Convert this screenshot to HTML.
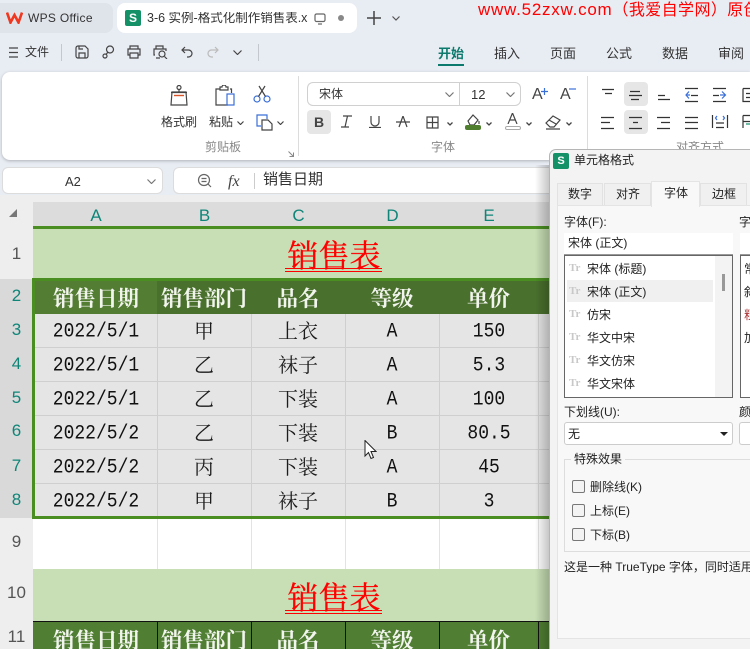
<!DOCTYPE html>
<html lang="zh"><head><meta charset="utf-8"><style>
*{box-sizing:border-box}
html,body{margin:0;padding:0;width:750px;height:649px;overflow:hidden}
body{font-family:"Liberation Sans","Noto Sans CJK SC",sans-serif;color:#333}
#w{position:absolute;left:0;top:0;width:750px;height:649px;overflow:hidden;background:#e8ecf3;contain:paint}
.a{position:absolute}
.t{position:absolute;white-space:nowrap;line-height:1}
.c{position:absolute;text-align:center;white-space:nowrap;font-family:"Liberation Serif","Noto Serif CJK SC",serif;color:#1c1c1c}
svg{position:absolute;overflow:hidden;fill:none;stroke:#444;stroke-width:1.2}
.rh{position:absolute;left:0;width:33px;text-align:center;font-size:17px;color:#555;background:#eee}
.rh.s{background:#d9d9d9;color:#0f8578}
.ch{position:absolute;top:202px;height:24px;line-height:27px;text-align:center;font-size:17px;color:#0f8578}
.d{font-family:"Liberation Mono",monospace;font-size:18px;transform:scaleY(1.15);color:#111}
.z{font-size:20px}
.h{font-size:21.5px;font-weight:700;color:#f2f5ee}
.v{position:absolute;width:1px;background:#cfcfcf}
.hl{position:absolute;height:1px;background:#cfcfcf}
.li{position:absolute;left:587px;font-size:12px;color:#222;white-space:nowrap;line-height:14px}
.tt{position:absolute;left:569px;font:700 11px "Liberation Serif",serif;color:#c8c8c8}
.cb{position:absolute;left:572px;width:13px;height:13px;border:1px solid #777;border-radius:2px;background:#f3f3f3}
.ti{position:absolute;left:33px;width:602px;font-size:31px;line-height:40px;color:#f00;-webkit-text-stroke:.3px #f00}
.ul{position:absolute;left:285px;width:97px;height:1px;background:#f00}
</style></head><body><div id="w">

<!-- Title bar -->
<div class="a" style="left:0;top:3px;width:113px;height:30px;background:#dfe3ea;border-radius:0 8px 8px 0"></div>
<svg style="left:6px;top:11px" width="17" height="13" viewBox="0 0 17 13"><path d="M1 1.500 4.500 11.500 8.500 4 12.500 11.500 16 1.500" stroke="#f0371f" stroke-width="2.600"/></svg>
<div class="t" style="left:28px;top:12px;font-size:12px;color:#333;letter-spacing:.3px">WPS Office</div>
<div class="a" style="left:117px;top:3px;width:240px;height:30px;background:#fff;border-radius:8px"></div>
<div class="a" style="left:125px;top:10px;width:16px;height:16px;background:#149167;border-radius:2px;color:#fff;font:700 12px/16px 'Liberation Sans',sans-serif;text-align:center">S</div>
<div class="t" style="left:147px;top:12px;font-size:12.5px;width:161px;overflow:hidden;color:#333">3-6 实例-格式化制作销售表.xlsx</div>
<svg style="left:314px;top:13px" width="12" height="12" viewBox="0 0 12 12"><rect x="1" y="1" width="10" height="7.500" rx="1.500" stroke="#666"/><path d="M4 11H8" stroke="#666"/></svg>
<div class="a" style="left:338px;top:15px;width:6px;height:6px;border-radius:50%;background:#888"></div>
<svg style="left:367px;top:11px" width="14" height="14" viewBox="0 0 14 14"><path d="M7 0V14M0 7H14" stroke="#444" stroke-width="1.500"/></svg>
<svg style="left:392px;top:16px" width="8" height="5" viewBox="0 0 8 5"><path d="M.5 .5 4 4 7.500 .5" stroke="#555"/></svg>
<div class="t" style="left:478px;top:1px;font-size:17px;color:#f00;letter-spacing:.75px;line-height:17px;width:272px;overflow:hidden">www.52zxw.com<span style="font-size:16px;letter-spacing:.4px">（我爱自学网）原创</span></div>

<!-- Quick access row -->
<svg style="left:8px;top:47px" width="11" height="11" viewBox="0 0 11 11"><path d="M1 1H10M1 5.500H10M1 10H10"/></svg>
<div class="t" style="left:25px;top:46px;font-size:12px;color:#333">文件</div>
<div class="a" style="left:61px;top:44px;width:1px;height:17px;background:#c4c8ce"></div>
<svg style="left:75px;top:45px" width="14" height="14" viewBox="0 0 14 14"><path d="M1 3a2 2 0 0 1 2-2H10L13 4V11a2 2 0 0 1-2 2H3a2 2 0 0 1-2-2ZM4 13V8H10V13M4 1V4H8"/></svg>
<svg style="left:102px;top:45px" width="13" height="14" viewBox="0 0 13 14"><circle cx="8" cy="4.500" r="3.500"/><circle cx="3" cy="11" r="2"/><path d="M6 7 4 9.500"/></svg>
<svg style="left:127px;top:45px" width="14" height="14" viewBox="0 0 14 14"><path d="M3 4V1H11V4M3 10H1V4H13V10H11M3 8H11V13H3Z"/></svg>
<svg style="left:153px;top:45px" width="15" height="14" viewBox="0 0 15 14"><path d="M3 4V1H10V4M2 10H1V4H13V6"/><circle cx="9" cy="9" r="3"/><path d="M11.500 11.500 14 14M3 13H7"/></svg>
<svg style="left:181px;top:46px" width="12" height="12" viewBox="0 0 12 12"><path d="M4 1 1 4 4 7M1 4H7.500A3.500 3.500 0 0 1 7.500 11H6"/></svg>
<svg style="left:207px;top:46px" width="12" height="12" viewBox="0 0 12 12"><path d="M8 1 11 4 8 7M11 4H4.500A3.500 3.500 0 0 0 4.500 11H6" stroke="#bbb"/></svg>
<svg style="left:233px;top:50px" width="9" height="5" viewBox="0 0 9 5"><path d="M.5 .5 4.500 4.500 8.500 .5"/></svg>
<div class="a" style="left:258px;top:44px;width:1px;height:17px;background:#c4c8ce"></div>

<!-- Ribbon tabs -->
<div class="t" style="left:438px;top:47px;font-size:13px;font-weight:700;color:#0c7a6c">开始</div>
<div class="a" style="left:438px;top:64px;width:26px;height:2px;background:#0c7a6c"></div>
<div class="t" style="left:494px;top:47px;font-size:13px">插入</div>
<div class="t" style="left:550px;top:47px;font-size:13px">页面</div>
<div class="t" style="left:606px;top:47px;font-size:13px">公式</div>
<div class="t" style="left:662px;top:47px;font-size:13px">数据</div>
<div class="t" style="left:718px;top:47px;font-size:13px">审阅</div>

<!-- Ribbon -->
<div class="a" style="left:2px;top:72px;width:748px;height:88px;background:#fff;border-radius:8px 0 0 8px;box-shadow:0 1px 3px rgba(0,0,0,.25)"></div>
<div class="a" style="left:298px;top:76px;width:1px;height:80px;background:#dcdcdc"></div>
<div class="a" style="left:587px;top:76px;width:1px;height:80px;background:#dcdcdc"></div>

<svg style="left:169px;top:85px" width="20" height="21" viewBox="0 0 20 21"><circle cx="10" cy="2.500" r="2"/><path d="M3 7H17L18 20H2L3 7ZM10 4.500V7M2 7.500H18" stroke="#444"/><path d="M5 10.500H15" stroke="#d8542a" stroke-width="1.400"/></svg>
<svg style="left:215px;top:85px" width="22" height="21" viewBox="0 0 22 21"><path d="M5 4H1V20H13M15 4H16.500V8M5 4V2H7A2 2 0 0 1 11 2H13V4V5H5Z"/><rect x="12" y="9" width="7" height="11" stroke="#3a6fd8"/></svg>
<svg style="left:253px;top:85px" width="18" height="18" viewBox="0 0 18 18"><circle cx="4" cy="14" r="3" stroke="#3a6fd8"/><circle cx="14" cy="14" r="3" stroke="#3a6fd8"/><path d="M5.500 11.500 12 1M12.500 11.500 6 1"/></svg>
<svg style="left:256px;top:114px" width="18" height="17" viewBox="0 0 18 17"><path d="M5 12H1V1H11V5" stroke="#3a6fd8"/><path d="M6 6H12L16 10V16H6Z"/></svg>
<svg style="left:277px;top:121px" width="7" height="4" viewBox="0 0 7 4"><path d="M.5 .5 3.500 3.500 6.500 .5"/></svg>
<svg style="left:237px;top:121px" width="7" height="4" viewBox="0 0 7 4"><path d="M.5 .5 3.500 3.500 6.500 .5"/></svg>
<div class="t" style="left:161px;top:116px;font-size:12px">格式刷</div>
<div class="t" style="left:209px;top:116px;font-size:12px">粘贴</div>
<div class="t" style="left:205px;top:141px;font-size:12px;color:#888">剪贴板</div>
<svg style="left:288px;top:151px" width="6" height="6" viewBox="0 0 6 6"><path d="M.5 .5 5.500 5.500M5.500 1.500V5.500H1.500" stroke="#888" stroke-width="1"/></svg>

<div class="a" style="left:307px;top:82px;width:154px;height:24px;border:1px solid #d0d0d0;border-right:0;border-radius:6px 0 0 6px"></div>
<div class="a" style="left:459px;top:82px;width:62px;height:24px;border:1px solid #d0d0d0;border-radius:0 6px 6px 0"></div>
<div class="t" style="left:319px;top:88px;font-size:12px;color:#333">宋体</div>
<svg style="left:445px;top:92px" width="9" height="5" viewBox="0 0 9 5"><path d="M.5 .5 4.500 4.500 8.500 .5" stroke="#777"/></svg>
<div class="t" style="left:471px;top:88px;font-size:13px">12</div>
<svg style="left:506px;top:92px" width="9" height="5" viewBox="0 0 9 5"><path d="M.5 .5 4.500 4.500 8.500 .5" stroke="#777"/></svg>
<div class="t" style="left:532px;top:87px;font-size:16px;color:#444">A</div>
<svg style="left:541px;top:88px" width="7" height="7" viewBox="0 0 7 7"><path d="M3.500 0V7M0 3.500H7" stroke="#3a6fd8"/></svg>
<div class="t" style="left:560px;top:87px;font-size:16px;color:#444">A</div>
<svg style="left:569px;top:88px" width="7" height="2" viewBox="0 0 7 2"><path d="M0 1H7" stroke="#3a6fd8"/></svg>

<div class="a" style="left:307px;top:110px;width:24px;height:24px;background:#e6e6e6;border-radius:4px"></div>
<div class="t" style="left:314px;top:115px;font-size:14px;font-weight:700;color:#444">B</div>
<svg style="left:340px;top:115px" width="13" height="13" viewBox="0 0 13 13"><path d="M3 1H12M7.500 1 5 12M1 12H9"/></svg>
<svg style="left:369px;top:116px" width="12" height="12" viewBox="0 0 12 12"><path d="M2 0V6A4 4 0 0 0 10 6V0M0 11.500H12"/></svg>
<svg style="left:396px;top:116px" width="14" height="12" viewBox="0 0 14 12"><path d="M3 11 7 0 11 11M0 6H14"/></svg>
<svg style="left:426px;top:116px" width="13" height="13" viewBox="0 0 13 13"><path d="M1 1H12V12H1ZM6.500 1V12M1 6.500H12"/></svg>
<svg style="left:447px;top:122px" width="6" height="4" viewBox="0 0 6 4"><path d="M.5 .5 3 3 5.500 .5" stroke-width="1.300"/></svg>
<svg style="left:466px;top:114px" width="15" height="12" viewBox="0 0 15 12"><path d="M2 7 7 1 12 6 8 11H4ZM13 7V10"/></svg>
<div class="a" style="left:465px;top:125px;width:16px;height:5px;background:#4f7f2e;border-radius:2px"></div>
<svg style="left:486px;top:122px" width="6" height="4" viewBox="0 0 6 4"><path d="M.5 .5 3 3 5.500 .5" stroke-width="1.300"/></svg>
<svg style="left:507px;top:113px" width="11" height="11" viewBox="0 0 11 11"><path d="M1 11 5.500 0 10 11M3 7H8"/></svg>
<div class="a" style="left:505px;top:126px;width:16px;height:4px;border:1px solid #aaa;border-radius:2px"></div>
<svg style="left:526px;top:122px" width="6" height="4" viewBox="0 0 6 4"><path d="M.5 .5 3 3 5.500 .5" stroke-width="1.300"/></svg>
<svg style="left:545px;top:115px" width="16" height="15" viewBox="0 0 16 15"><path d="M1 8 8 1 15 5 9 12H5ZM4 5 11 9M1 14H15"/></svg>
<svg style="left:566px;top:122px" width="6" height="4" viewBox="0 0 6 4"><path d="M.5 .5 3 3 5.500 .5" stroke-width="1.300"/></svg>
<div class="t" style="left:431px;top:141px;font-size:12px;color:#888">字体</div>

<div class="a" style="left:624px;top:82px;width:24px;height:24px;background:#e6e6e6;border-radius:4px"></div>
<div class="a" style="left:624px;top:110px;width:24px;height:24px;background:#e6e6e6;border-radius:4px"></div>
<!-- alignment icons: local coords = page coords minus (590,78) -->
<svg style="left:590px;top:78px" width="160" height="62" viewBox="0 0 160 62">
<path stroke="#333" d="M12 11.500H24M15 15.500H22M40 13.500H50M39 17.500H52M41 21.500H49M68 17.500H75M68 21.500H80M95 10.500H108M95 23.500H108M101 17.500H108M123 10.500H136M123 23.500H136M123 17.500H129M153 10.500V23.500H160M153 10.500H160M156 15.500H160M156 19.500H160"/>
<path stroke="#3a6fd8" d="M99 13.500 96 17 99 20.500M96 17H100M132 13.500 135.500 17 132 20.500M135 17H130"/>
<path stroke="#333" d="M11 39.500H24M11 44.500H20M11 50.500H24M39 39.500H52M43 44.500H48M39 50.500H52M67 39.500H80M71 44.500H80M67 50.500H80M95 39.500H108M95 44.500H108M95 50.500H108M122.500 37V50M137.500 37V50M126 45H134M126 49.500H134M153 37.500H160M153 37.500V50M153 43.500H160"/>
<path stroke="#3a6fd8" d="M127 38 125.500 40 127 42M133 38 134.500 40 133 42"/>
<path stroke="#15906e" d="M156 46H160"/>
</svg>
<div class="t" style="left:676px;top:141px;font-size:12px;color:#888;width:48px;height:8px;overflow:hidden">对齐方式</div>

<!-- Formula bar -->
<div class="a" style="left:2px;top:167px;width:161px;height:27px;background:#fff;border:1px solid #dcdcdc;border-radius:6px"></div>
<div class="t" style="left:65px;top:175px;font-size:13px;color:#333">A2</div>
<svg style="left:147px;top:179px" width="9" height="5" viewBox="0 0 9 5"><path d="M.5 .5 4.500 4.500 8.500 .5" stroke="#777"/></svg>
<div class="a" style="left:173px;top:167px;width:577px;height:27px;background:#fff;border:1px solid #dcdcdc;border-right:0;border-radius:6px 0 0 6px"></div>
<svg style="left:197px;top:173px" width="15" height="15" viewBox="0 0 15 15"><circle cx="7" cy="7" r="5.500" stroke="#666"/><path d="M4.500 5.500H9.500M4.500 8.500H9.500M11 11 14 14" stroke="#666"/></svg>
<div class="t" style="left:228px;top:173px;font:italic 16px 'Liberation Serif',serif;color:#444">fx</div>
<div class="a" style="left:254px;top:173px;width:1px;height:16px;background:#ccc"></div>
<div class="t" style="left:263px;top:172px;font-size:15px;color:#333">销售日期</div>

<!-- Sheet base -->
<div class="a" style="left:0;top:195px;width:750px;height:454px;background:#eee"></div>
<div class="a" style="left:33px;top:202px;width:717px;height:447px;background:#fff"></div>

<svg style="left:9px;top:209px" width="8" height="8" viewBox="0 0 8 8"><path d="M8 0V8H0Z" fill="#777" stroke="none"/></svg>
<!-- Col headers -->
<div class="a" style="left:33px;top:202px;width:717px;height:24px;background:#dcdcdc"></div>
<div class="ch" style="left:33px;width:126px">A</div>
<div class="ch" style="left:157px;width:95px">B</div>
<div class="ch" style="left:251px;width:95px">C</div>
<div class="ch" style="left:345px;width:95px">D</div>
<div class="ch" style="left:439px;width:100px">E</div>

<!-- Row headers -->
<div class="rh" style="top:228px;height:51px;line-height:51px">1</div>
<div class="rh s" style="top:279px;height:35px;line-height:33px">2</div>
<div class="rh s" style="top:314px;height:33px;line-height:31px">3</div>
<div class="rh s" style="top:347px;height:34px;line-height:34px">4</div>
<div class="rh s" style="top:381px;height:34px;line-height:34px">5</div>
<div class="rh s" style="top:415px;height:34px;line-height:32px">6</div>
<div class="rh s" style="top:449px;height:34px;line-height:34px">7</div>
<div class="rh s" style="top:483px;height:35px;line-height:34px">8</div>
<div class="rh" style="top:518px;height:51px;line-height:47px">9</div>
<div class="rh" style="top:569px;height:52px;line-height:48px">10</div>
<div class="rh" style="top:621px;height:28px;line-height:32px">11</div>

<!-- Title rows -->
<div class="a" style="left:33px;top:228px;width:717px;height:51px;background:#c8dfb5"></div>
<div class="a" style="left:33px;top:569px;width:717px;height:52px;background:#c8dfb5"></div>
<div class="c ti" style="top:237px">销售表</div>
<div class="ul" style="top:268px"></div><div class="ul" style="top:271px"></div>
<div class="c ti" style="top:579px">销售表</div>
<div class="ul" style="top:610px"></div><div class="ul" style="top:613px"></div>

<!-- Header row + body -->
<div class="a" style="left:33px;top:279px;width:717px;height:35px;background:#4a702d"></div>
<div class="a" style="left:35px;top:281px;width:122px;height:33px;background:#537d33"></div>
<div class="a" style="left:33px;top:314px;width:717px;height:204px;background:#e5e5e5"></div>
<div class="hl" style="left:35px;top:347px;width:715px"></div>
<div class="hl" style="left:35px;top:381px;width:715px"></div>
<div class="hl" style="left:35px;top:415px;width:715px"></div>
<div class="hl" style="left:35px;top:449px;width:715px"></div>
<div class="hl" style="left:35px;top:483px;width:715px"></div>
<div class="v" style="left:157px;top:314px;height:204px"></div>
<div class="v" style="left:251px;top:314px;height:204px"></div>
<div class="v" style="left:345px;top:314px;height:204px"></div>
<div class="v" style="left:439px;top:314px;height:204px"></div>
<div class="v" style="left:538px;top:314px;height:204px"></div>
<div class="v" style="left:157px;top:518px;height:51px;background:#e3e3e3"></div>
<div class="v" style="left:251px;top:518px;height:51px;background:#e3e3e3"></div>
<div class="v" style="left:345px;top:518px;height:51px;background:#e3e3e3"></div>
<div class="v" style="left:439px;top:518px;height:51px;background:#e3e3e3"></div>
<div class="v" style="left:538px;top:518px;height:51px;background:#e3e3e3"></div>

<!-- Selection border -->
<div class="a" style="left:33px;top:226px;width:717px;height:3px;background:#4a8e22"></div>
<div class="a" style="left:32px;top:278px;width:718px;height:3px;background:#4a8e22"></div>
<div class="a" style="left:32px;top:516px;width:718px;height:3px;background:#4a8e22"></div>
<div class="a" style="left:32px;top:278px;width:3px;height:241px;background:#4a8e22"></div>

<!-- Header text -->
<div class="c h" style="left:33px;top:286px;width:126px;line-height:26px">销售日期</div>
<div class="c h" style="left:157px;top:286px;width:94px;line-height:26px">销售部门</div>
<div class="c h" style="left:251px;top:286px;width:94px;line-height:26px">品名</div>
<div class="c h" style="left:345px;top:286px;width:94px;line-height:26px">等级</div>
<div class="c h" style="left:439px;top:286px;width:99px;line-height:26px">单价</div>

<!-- Body -->
<div class="c d" style="left:33px;top:320px;width:126px;line-height:24px">2022/5/1</div><div class="c z" style="left:157px;top:320px;width:94px;line-height:24px">甲</div><div class="c z" style="left:251px;top:320px;width:94px;line-height:24px">上衣</div><div class="c d" style="left:345px;top:320px;width:94px;line-height:24px">A</div><div class="c d" style="left:439px;top:320px;width:100px;line-height:24px">150</div>
<div class="c d" style="left:33px;top:354px;width:126px;line-height:24px">2022/5/1</div><div class="c z" style="left:157px;top:354px;width:94px;line-height:24px">乙</div><div class="c z" style="left:251px;top:354px;width:94px;line-height:24px">袜子</div><div class="c d" style="left:345px;top:354px;width:94px;line-height:24px">A</div><div class="c d" style="left:439px;top:354px;width:100px;line-height:24px">5.3</div>
<div class="c d" style="left:33px;top:388px;width:126px;line-height:24px">2022/5/1</div><div class="c z" style="left:157px;top:388px;width:94px;line-height:24px">乙</div><div class="c z" style="left:251px;top:388px;width:94px;line-height:24px">下装</div><div class="c d" style="left:345px;top:388px;width:94px;line-height:24px">A</div><div class="c d" style="left:439px;top:388px;width:100px;line-height:24px">100</div>
<div class="c d" style="left:33px;top:422px;width:126px;line-height:24px">2022/5/2</div><div class="c z" style="left:157px;top:422px;width:94px;line-height:24px">乙</div><div class="c z" style="left:251px;top:422px;width:94px;line-height:24px">下装</div><div class="c d" style="left:345px;top:422px;width:94px;line-height:24px">B</div><div class="c d" style="left:439px;top:422px;width:100px;line-height:24px">80.5</div>
<div class="c d" style="left:33px;top:456px;width:126px;line-height:24px">2022/5/2</div><div class="c z" style="left:157px;top:456px;width:94px;line-height:24px">丙</div><div class="c z" style="left:251px;top:456px;width:94px;line-height:24px">下装</div><div class="c d" style="left:345px;top:456px;width:94px;line-height:24px">A</div><div class="c d" style="left:439px;top:456px;width:100px;line-height:24px">45</div>
<div class="c d" style="left:33px;top:490px;width:126px;line-height:24px">2022/5/2</div><div class="c z" style="left:157px;top:490px;width:94px;line-height:24px">甲</div><div class="c z" style="left:251px;top:490px;width:94px;line-height:24px">袜子</div><div class="c d" style="left:345px;top:490px;width:94px;line-height:24px">B</div><div class="c d" style="left:439px;top:490px;width:100px;line-height:24px">3</div>

<!-- Row 11 -->
<div class="a" style="left:33px;top:621px;width:717px;height:28px;background:#507e32;border-top:1px solid #111"></div>
<div class="v" style="left:157px;top:621px;height:28px;background:#111"></div>
<div class="v" style="left:251px;top:621px;height:28px;background:#111"></div>
<div class="v" style="left:345px;top:621px;height:28px;background:#111"></div>
<div class="v" style="left:439px;top:621px;height:28px;background:#111"></div>
<div class="v" style="left:538px;top:621px;height:28px;background:#111"></div>
<div class="c h" style="left:33px;top:628px;width:126px;line-height:26px;height:21px;overflow:hidden">销售日期</div>
<div class="c h" style="left:157px;top:628px;width:94px;line-height:26px;height:21px;overflow:hidden">销售部门</div>
<div class="c h" style="left:251px;top:628px;width:94px;line-height:26px;height:21px;overflow:hidden">品名</div>
<div class="c h" style="left:345px;top:628px;width:94px;line-height:26px;height:21px;overflow:hidden">等级</div>
<div class="c h" style="left:439px;top:628px;width:99px;line-height:26px;height:21px;overflow:hidden">单价</div>

<!-- Mouse cursor -->
<svg style="left:364px;top:440px" width="13" height="20" viewBox="0 0 13 20"><path d="M1 .5V16L4.500 12.500 7 18.500 9.500 17.500 7 11.500H12Z" fill="#fff" stroke="#222" stroke-width="1"/></svg>

<!-- Dialog shadow -->
<div class="a" style="left:535px;top:165px;width:14px;height:484px;background:linear-gradient(90deg,rgba(0,0,0,0),rgba(0,0,0,.22))"></div>

<!-- Dialog -->
<div class="a" style="left:549px;top:149px;width:201px;height:500px;background:#f3f3f3;border:1px solid #b5b5b5;border-right:0;border-bottom:0;border-radius:7px 0 0 0"></div>
<div class="a" style="left:553px;top:153px;width:16px;height:16px;background:#149167;border-radius:2px;color:#fff;font:700 11px/16px 'Liberation Sans',sans-serif;text-align:center">S</div>
<div class="t" style="left:574px;top:154px;font-size:12px;color:#222">单元格格式</div>

<div class="a" style="left:557px;top:183px;width:46px;height:23px;background:#f0f0f0;border:1px solid #e2e2e2"></div>
<div class="a" style="left:604px;top:183px;width:47px;height:23px;background:#f0f0f0;border:1px solid #e2e2e2"></div>
<div class="a" style="left:700px;top:183px;width:47px;height:23px;background:#f0f0f0;border:1px solid #e2e2e2"></div>
<div class="a" style="left:557px;top:205px;width:193px;height:434px;background:#f8f8f8;border:1px solid #e4e4e4;border-right:0"></div>
<div class="a" style="left:651px;top:181px;width:49px;height:26px;background:#f8f8f8;border:1px solid #e4e4e4;border-bottom:0"></div>
<div class="t" style="left:568px;top:188px;font-size:12px;color:#222">数字</div>
<div class="t" style="left:616px;top:188px;font-size:12px;color:#222">对齐</div>
<div class="t" style="left:664px;top:187px;font-size:12px;color:#222">字体</div>
<div class="t" style="left:712px;top:188px;font-size:12px;color:#222">边框</div>

<div class="t" style="left:564px;top:216px;font-size:12px;color:#222">字体(F):</div>
<div class="t" style="left:739px;top:216px;font-size:12px;color:#222;width:11px;overflow:hidden">字形</div>
<div class="a" style="left:564px;top:233px;width:169px;height:22px;background:#fff;border-bottom:1px solid #999"></div>
<div class="a" style="left:740px;top:233px;width:10px;height:22px;background:#fff;border-bottom:1px solid #999"></div>
<div class="t" style="left:568px;top:237px;font-size:12px;color:#222">宋体 (正文)</div>

<div class="a" style="left:564px;top:255px;width:169px;height:143px;background:#fff;border:1px solid #666"></div>
<div class="a" style="left:740px;top:255px;width:10px;height:143px;background:#fff;border:1px solid #666;border-right:0"></div>
<div class="a" style="left:567px;top:280px;width:146px;height:22px;background:#f0f0f0"></div>
<div class="a" style="left:715px;top:256px;width:17px;height:141px;background:#f3f3f3"></div>
<div class="a" style="left:722px;top:274px;width:3px;height:17px;background:#999"></div>
<div class="tt" style="top:262px">Tr</div><div class="li" style="top:262px">宋体 (标题)</div>
<div class="tt" style="top:285px">Tr</div><div class="li" style="top:285px">宋体 (正文)</div>
<div class="tt" style="top:308px">Tr</div><div class="li" style="top:308px">仿宋</div>
<div class="tt" style="top:331px">Tr</div><div class="li" style="top:331px">华文中宋</div>
<div class="tt" style="top:354px">Tr</div><div class="li" style="top:354px">华文仿宋</div>
<div class="tt" style="top:377px">Tr</div><div class="li" style="top:377px">华文宋体</div>
<div class="li" style="left:744px;top:262px;width:6px;overflow:hidden">常</div>
<div class="li" style="left:744px;top:285px;width:6px;overflow:hidden">斜</div>
<div class="li" style="left:744px;top:308px;width:6px;overflow:hidden;color:#a33">粗</div>
<div class="li" style="left:744px;top:331px;width:6px;overflow:hidden">加</div>

<div class="t" style="left:564px;top:406px;font-size:12px;color:#222">下划线(U):</div>
<div class="t" style="left:739px;top:406px;font-size:12px;color:#222;width:11px;overflow:hidden">颜色</div>
<div class="a" style="left:564px;top:422px;width:169px;height:23px;background:#fff;border:1px solid #ccc;border-radius:3px"></div>
<div class="a" style="left:739px;top:422px;width:11px;height:23px;background:#fff;border:1px solid #ccc;border-right:0;border-radius:3px 0 0 3px"></div>
<div class="t" style="left:568px;top:428px;font-size:12px;color:#222">无</div>
<svg style="left:720px;top:432px" width="8" height="4" viewBox="0 0 8 4"><path d="M0 0H8L4 4Z" fill="#222" stroke="none"/></svg>

<div class="a" style="left:564px;top:459px;width:186px;height:93px;border:1px solid #ddd;border-right:0"></div>
<div class="t" style="left:571px;top:453px;font-size:12px;color:#222;background:#f8f8f8;padding:0 3px">特殊效果</div>
<div class="cb" style="top:480px"></div><div class="t" style="left:590px;top:481px;font-size:12px;color:#222">删除线(K)</div>
<div class="cb" style="top:504px"></div><div class="t" style="left:590px;top:505px;font-size:12px;color:#222">上标(E)</div>
<div class="cb" style="top:528px"></div><div class="t" style="left:590px;top:529px;font-size:12px;color:#222">下标(B)</div>
<div class="t" style="left:564px;top:561px;font-size:12px;color:#222;width:186px;overflow:hidden">这是一种 TrueType 字体，同时适用于屏幕和打印机。</div>

</div></body></html>
